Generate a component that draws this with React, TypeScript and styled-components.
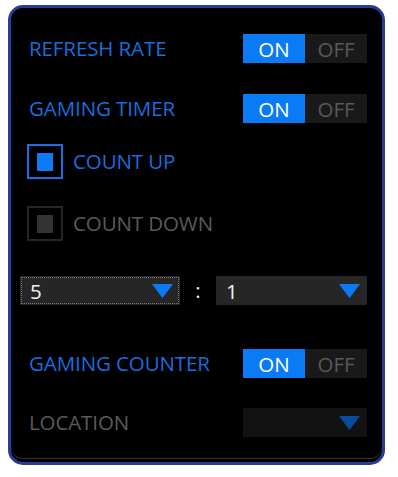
import React from "react";
import styled, { createGlobalStyle } from "styled-components";

const GlobalStyle = createGlobalStyle`
  html, body {
    margin: 0;
    padding: 0;
    background: #ffffff;
  }
  body {
    font-family: "Open Sans", "Noto Sans", sans-serif;
  }
`;

const Panel = styled.div`
  box-sizing: border-box;
  width: 377px;
  height: 460px;
  margin: 5px 0 0 8px;
  padding: 26px 15px 0 9px;
  background: #000;
  border: 3px solid #2a3d96;
  border-radius: 15px;
  box-shadow: inset 0 -3px 0 #000, inset 0 -4px 0 #3a3333;
  display: flex;
  flex-direction: column;
`;

const Row = styled.div<{ $mt?: number; $indent?: number }>`
  display: flex;
  align-items: center;
  justify-content: space-between;
  margin-top: ${(p) => p.$mt ?? 0}px;
  padding-left: ${(p) => p.$indent ?? 9}px;
`;

const Label = styled.span<{ $active?: boolean }>`
  font-size: 20.5px;
  line-height: 29px;
  letter-spacing: -0.1px;
  color: ${(p) => (p.$active ? "#1a6ddc" : "#5a5a5a")};
`;

const Toggle = styled.div`
  display: flex;
  height: 29px;
`;

const ToggleHalf = styled.div<{ $on?: boolean }>`
  width: 62px;
  display: flex;
  align-items: center;
  justify-content: center;
  font-size: 20.5px;
  background: ${(p) => (p.$on ? "#0b7bf5" : "#191919")};
  color: ${(p) => (p.$on ? "#ffffff" : "#5a5a5a")};
`;

const CheckRow = styled.div<{ $mt?: number }>`
  display: flex;
  align-items: center;
  gap: 10px;
  margin-top: ${(p) => p.$mt ?? 0}px;
  padding-left: 7px;
`;

const Box = styled.div<{ $checked?: boolean }>`
  box-sizing: border-box;
  width: 36px;
  height: 35px;
  border: 2px solid ${(p) => (p.$checked ? "#1570e8" : "#262626")};
  display: flex;
  align-items: center;
  justify-content: center;
`;

const Fill = styled.div<{ $checked?: boolean }>`
  width: 16px;
  height: 18px;
  background: ${(p) => (p.$checked ? "#0d7bf8" : "#333333")};
`;

const SelectRow = styled.div<{ $mt?: number }>`
  display: flex;
  align-items: center;
  margin-top: ${(p) => p.$mt ?? 0}px;
`;

const Select = styled.div<{ $width?: number; $focused?: boolean; $dark?: boolean }>`
  box-sizing: border-box;
  ${(p) => (p.$width ? `width: ${p.$width}px;` : "flex: 1;")}
  height: 29px;
  display: flex;
  align-items: center;
  justify-content: space-between;
  padding: 0 7px 0 10px;
  background: ${(p) => (p.$dark ? "#121212" : "#262626")};
  color: #f2f2f2;
  font-size: 20.5px;
  outline: ${(p) => (p.$focused ? "1px dotted #7a7a7a" : "none")};
  outline-offset: -2px;
`;

const Colon = styled.span`
  width: 36px;
  text-align: center;
  color: #f2f2f2;
  font-size: 20.5px;
  line-height: 29px;
`;

const Arrow = ({ color = "#0b7bf5" }: { color?: string }) => (
  <svg width="21" height="14" viewBox="0 0 21 14">
    <polygon points="0,0 21,0 10.5,14" fill={color} />
  </svg>
);

export default function App() {
  return (
    <>
      <GlobalStyle />
      <Panel>
        <Row>
          <Label $active>REFRESH RATE</Label>
          <Toggle>
            <ToggleHalf $on>ON</ToggleHalf>
            <ToggleHalf>OFF</ToggleHalf>
          </Toggle>
        </Row>
        <Row $mt={31}>
          <Label $active>GAMING TIMER</Label>
          <Toggle>
            <ToggleHalf $on>ON</ToggleHalf>
            <ToggleHalf>OFF</ToggleHalf>
          </Toggle>
        </Row>
        <CheckRow $mt={21}>
          <Box $checked>
            <Fill $checked />
          </Box>
          <Label $active>COUNT UP</Label>
        </CheckRow>
        <CheckRow $mt={27}>
          <Box>
            <Fill />
          </Box>
          <Label>COUNT DOWN</Label>
        </CheckRow>
        <SelectRow $mt={35}>
          <Select $width={160} $focused>
            <span>5</span>
            <Arrow />
          </Select>
          <Colon>:</Colon>
          <Select>
            <span>1</span>
            <Arrow />
          </Select>
        </SelectRow>
        <Row $mt={44}>
          <Label $active>GAMING COUNTER</Label>
          <Toggle>
            <ToggleHalf $on>ON</ToggleHalf>
            <ToggleHalf>OFF</ToggleHalf>
          </Toggle>
        </Row>
        <Row $mt={30}>
          <Label>LOCATION</Label>
          <Select $width={124} $dark>
            <span />
            <Arrow color="#0a4b9e" />
          </Select>
        </Row>
      </Panel>
    </>
  );
}
